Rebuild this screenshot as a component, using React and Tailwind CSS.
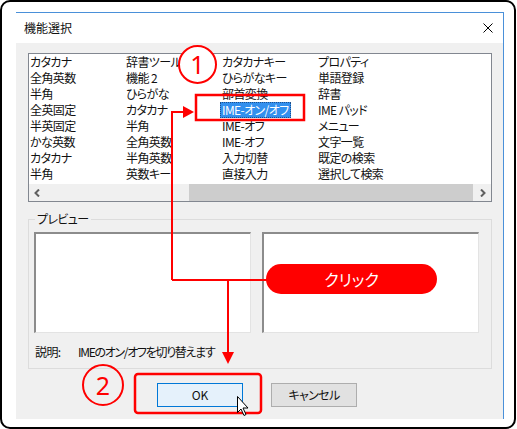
import React from "react";

const cols = [
  ["カタカナ", "全角英数", "半角", "全英固定", "半英固定", "かな英数", "カタカナ", "半角"],
  ["辞書ツール", "機能 2", "ひらがな", "カタカナ", "半角", "全角英数", "半角英数", "英数キー"],
  ["カタカナキー", "ひらがなキー", "部首変換", "IME-オン/オフ", "IME-オフ", "IME-オフ", "入力切替", "直接入力"],
  ["プロパティ", "単語登録", "辞書", "IME パッド", "メニュー", "文字一覧", "既定の検索", "選択して検索"],
];

export default function App() {
  return (
    <div className="relative w-[517px] h-[429px] bg-white font-['Noto_Sans_CJK_JP',sans-serif] [font-feature-settings:'palt'] text-[12px] tracking-[-0.6px] text-[#111] overflow-hidden">
      <div className="w-[516px] h-[429px] border-2 border-black rounded-[10px] pl-[14px] pt-[10px]">
        {/* dialog */}
        <div className="w-[488px] h-[407px] flex flex-col border-t border-r border-[#4a90d9]">
          {/* title bar */}
          <div className="h-[30px] bg-white flex items-center justify-between pl-[8px] pr-[10px]">
            <span className="leading-[16px] text-[12px] tracking-normal">機能選択</span>
            <svg width="10" height="10" viewBox="0 0 10 10">
              <path d="M0.5 0.5 L9.5 9.5 M9.5 0.5 L0.5 9.5" stroke="#000" strokeWidth="1" />
            </svg>
          </div>
          {/* body */}
          <div className="flex-1 bg-[#f0f0f0] pt-[10px] px-[12px]">
            {/* list */}
            <div className="w-[464px] h-[149px] border border-[#828790] bg-white flex flex-col">
              <div className="flex-1 flex pl-[1px]">
                {cols.map((col, ci) => (
                  <div key={ci} className="w-[96px] flex flex-col">
                    {col.map((t, ri) => {
                      const sel = ci === 2 && ri === 3;
                      return (
                        <div key={ri} className="h-[16px] leading-[16px] whitespace-nowrap">
                          {sel ? (
                            <span className="inline-block h-[16px] leading-[16px] -ml-[2px] px-[2px] bg-[#3390ee] text-white outline outline-1 outline-dotted outline-[#1c4f8c] -outline-offset-1">
                              {t}
                            </span>
                          ) : (
                            <span>{t}</span>
                          )}
                        </div>
                      );
                    })}
                  </div>
                ))}
              </div>
              {/* scrollbar */}
              <div className="h-[17px] bg-[#f0f0f0] flex items-stretch">
                <div className="w-[17px] flex items-center justify-center">
                  <svg width="7" height="8" viewBox="0 0 7 8">
                    <path d="M5 0.5 L1.5 4 L5 7.5" stroke="#606060" strokeWidth="2" fill="none" />
                  </svg>
                </div>
                <div className="flex-1 flex">
                  <div className="ml-[143px] w-[284px] bg-[#cdcdcd]" />
                </div>
                <div className="w-[17px] flex items-center justify-center">
                  <svg width="7" height="8" viewBox="0 0 7 8">
                    <path d="M2 0.5 L5.5 4 L2 7.5" stroke="#606060" strokeWidth="2" fill="none" />
                  </svg>
                </div>
              </div>
            </div>
            {/* group box */}
            <div className="relative mt-[17px] w-[464px] h-[150px] border border-[#dcdcdc] pt-[12px] pl-[5px]">
              <span className="absolute -top-[9px] left-[6px] px-[2px] bg-[#f0f0f0] leading-[16px]">プレビュー</span>
              <div className="flex gap-[11px]">
                <div className="w-[217px] h-[101px] bg-white border-t-2 border-l-2 border-[#8c8c8c] border-r border-b border-r-[#e3e3e3] border-b-[#e3e3e3]" />
                <div className="w-[217px] h-[101px] bg-white border-t-2 border-l-2 border-[#8c8c8c] border-r border-b border-r-[#e3e3e3] border-b-[#e3e3e3]" />
              </div>
              <div className="mt-[11px] flex leading-[16px] pl-[1px]">
                <span className="w-[43px]">説明:</span>
                <span className="tracking-[-1.3px]">IMEのオン/オフを切り替えます</span>
              </div>
            </div>
            {/* buttons */}
            <div className="mt-[14px] flex gap-[28px] pl-[129px]">
              <div className="w-[86px] h-[24px] bg-[#e5f1fb] border border-[#0078d7] flex items-center justify-center leading-[16px] tracking-normal">OK</div>
              <div className="w-[86px] h-[24px] bg-[#e1e1e1] border border-[#adadad] flex items-center justify-center leading-[16px]">キャンセル</div>
            </div>
          </div>
        </div>
      </div>

      {/* annotations overlay */}
      <svg className="absolute left-0 top-0 pointer-events-none" width="517" height="429" viewBox="0 0 517 429">
        <rect x="196" y="95" width="108" height="25" fill="none" stroke="#ff0000" strokeWidth="2.5" />
        <path d="M172 280 L172 112 L184 112" stroke="#ff0000" strokeWidth="2" fill="none" />
        <path d="M183 106 L194 112 L183 118 Z" fill="#ff0000" />
        <path d="M172 280 L270 280" stroke="#ff0000" strokeWidth="2" fill="none" />
        <path d="M228 280 L228 353" stroke="#ff0000" strokeWidth="2" fill="none" />
        <path d="M222 352 L234 352 L228 364 Z" fill="#ff0000" />
        <rect x="135" y="374" width="126" height="39" rx="3" fill="none" stroke="#ff0000" strokeWidth="2.5" />
        <path d="M237.5 396.5 L237.5 412.5 L241 409 L244 415.5 L246 414.5 L243 408 L248 408 Z" fill="#fff" stroke="#000" strokeWidth="1" strokeLinejoin="miter" />
      </svg>
      <div className="absolute left-[178px] top-[45px] w-[39px] h-[39px] rounded-full border-2 border-[#ff0000] bg-white flex items-center justify-center text-[#ff0000] text-[25px] leading-none tracking-normal font-['Noto_Sans',sans-serif]">1</div>
      <div className="absolute left-[82px] top-[364px] w-[42px] h-[42px] rounded-full border-2 border-[#ff0000] flex items-center justify-center text-[#ff0000] text-[25px] leading-none tracking-normal font-['Noto_Sans',sans-serif]">2</div>
      <div className="absolute left-[266px] top-[264px] w-[171px] h-[30px] rounded-full bg-[#ff0000] flex items-center justify-center text-white text-[16px] leading-none tracking-normal">クリック</div>
    </div>
  );
}
